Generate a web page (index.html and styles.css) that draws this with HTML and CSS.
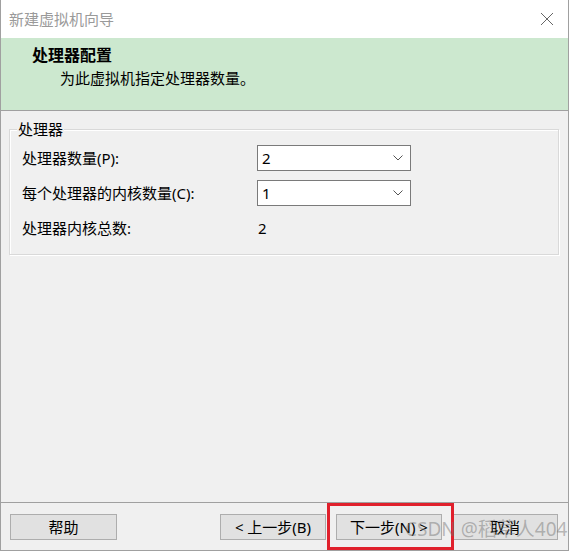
FILE: index.html
```html
<!DOCTYPE html>
<html lang="zh-CN">
<head>
<meta charset="utf-8">
<title>新建虚拟机向导</title>
<link rel="stylesheet" href="styles.css">
</head>
<body>
<div class="window">
  <div class="titlebar">
    <span class="title">新建虚拟机向导</span>
    <svg class="close" width="14" height="14" viewBox="0 0 14 14"><path d="M1 1 L13 13 M13 1 L1 13" stroke="#666" stroke-width="1" fill="none"/></svg>
  </div>
  <div class="header">
    <div class="h-title">处理器配置</div>
    <div class="h-sub">为此虚拟机指定处理器数量。</div>
  </div>
  <div class="content">
    <div class="group">
      <span class="legend">处理器</span>
      <div class="rows">
        <div class="label">处理器数量(P):</div>
        <div class="select"><span>2</span><svg class="chev" width="10" height="6" viewBox="0 0 10 6"><path d="M0.5 0.5 L5 5 L9.5 0.5" stroke="#555" stroke-width="1" fill="none"/></svg></div>
        <div class="label">每个处理器的内核数量(C):</div>
        <div class="select"><span>1</span><svg class="chev" width="10" height="6" viewBox="0 0 10 6"><path d="M0.5 0.5 L5 5 L9.5 0.5" stroke="#555" stroke-width="1" fill="none"/></svg></div>
        <div class="label">处理器内核总数:</div>
        <div class="value">2</div>
      </div>
    </div>
  </div>
  <div class="footer">
    <button class="btn">帮助</button>
    <button class="btn push">&lt; 上一步(B)</button>
    <button class="btn">下一步(N) &gt;</button>
    <button class="btn">取消</button>
    <div class="highlight"></div>
    <div class="watermark">CSDN @稻草人404</div>
  </div>
</div>
</body>
</html>
```

FILE: styles.css
```css
html, body {
  margin: 0;
  padding: 0;
  background: #ffffff;
}
body {
  font-family: "Noto Sans", "Noto Sans CJK SC", sans-serif;
  font-size: 15px;
  color: #000;
}
.window {
  width: 569px;
  height: 551px;
  box-sizing: border-box;
  border: 1px solid #a0a0a0;
  border-top: none;
  display: flex;
  flex-direction: column;
  background: #f0f0f0;
  position: relative;
}
.titlebar {
  height: 38px;
  background: #ffffff;
  display: flex;
  align-items: center;
  justify-content: space-between;
  padding: 0 14px 0 8px;
  flex: none;
}
.title {
  font-size: 15px;
  color: #9a9a9a;
  line-height: 20px;
  margin-top: -1px;
}
.close {
  display: block;
  margin-top: -1px;
}
.header {
  height: 73px;
  box-sizing: border-box;
  background: #cce8cf;
  border-bottom: 1px solid #a0a0a0;
  padding: 6px 0 0 31px;
  flex: none;
}
.h-title {
  font-size: 16px;
  font-weight: bold;
  line-height: 22px;
}
.h-sub {
  font-size: 15px;
  line-height: 22px;
  margin-left: 28px;
  margin-top: 1px;
}
.content {
  flex: 1;
  padding: 18px 9px 0 8px;
}
.group {
  position: relative;
  border: 1px solid #d9d9d9;
  box-shadow: inset 1px 1px 0 #ffffff, 1px 1px 0 #ffffff;
  padding: 15px 0 13px 12px;
}
.legend {
  position: absolute;
  top: -11px;
  left: 7px;
  padding: 0 1px;
  background: #f0f0f0;
  line-height: 20px;
  font-size: 15px;
}
.rows {
  display: grid;
  grid-template-columns: 235px 154px;
  grid-auto-rows: 26px;
  row-gap: 9px;
  align-items: center;
}
.label {
  line-height: 20px;
}
.value {
  padding-left: 1px;
}
.select {
  height: 26px;
  box-sizing: border-box;
  border: 1px solid #7a7a7a;
  background: #ffffff;
  display: flex;
  align-items: center;
  justify-content: space-between;
  padding: 0 7px 0 4px;
}
.chev { display: block; }
.footer {
  flex: none;
  height: 48px;
  box-sizing: border-box;
  border-top: 1px solid #a0a0a0;
  padding: 11px 10px 0 9px;
  display: flex;
  align-items: flex-start;
  gap: 10px;
  position: relative;
}
.btn {
  width: 106px;
  height: 26px;
  box-sizing: border-box;
  border: 1px solid #adadad;
  background: #e1e1e1;
  font-family: "Noto Sans", "Noto Sans CJK SC", sans-serif;
  font-size: 15px;
  color: #000;
  padding: 0;
  line-height: 22px;
}
.btn:first-child { width: 107px; }
.push { margin-left: auto; }
.highlight {
  position: absolute;
  left: 326px;
  top: 0px;
  width: 127px;
  height: 47px;
  box-sizing: border-box;
  border: 3px solid #e0202c;
}
.watermark {
  position: absolute;
  left: 404px;
  top: 14px;
  font-size: 19px;
  line-height: 24px;
  color: rgba(110, 110, 110, 0.45);
  white-space: nowrap;
  pointer-events: none;
}
```
